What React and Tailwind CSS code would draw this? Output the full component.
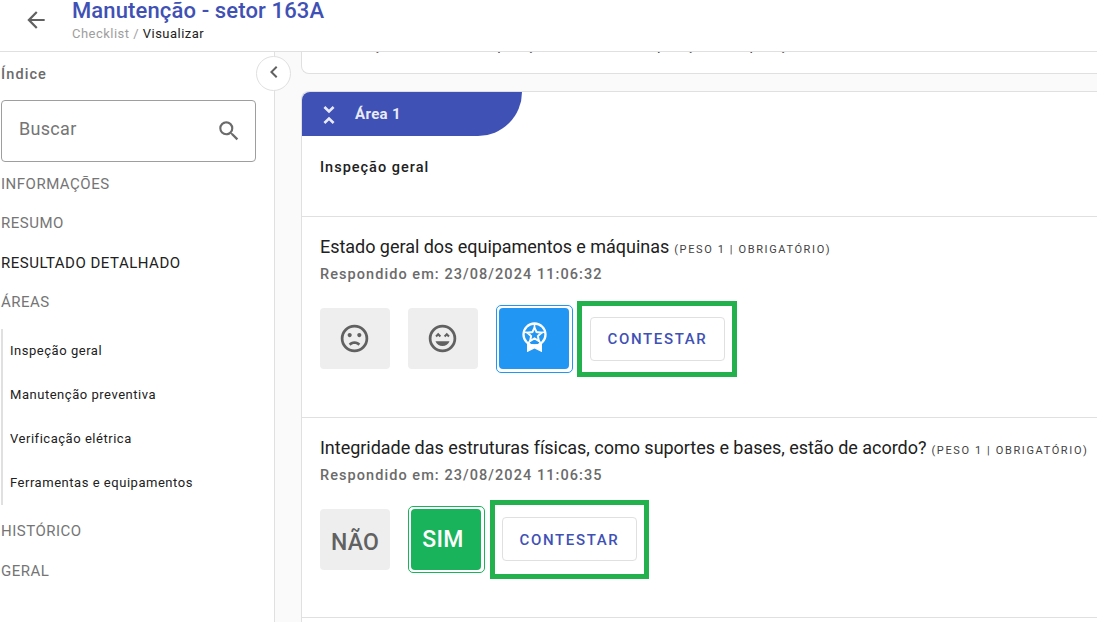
import React, { useState } from 'react';
import { MdArrowBack, MdChevronLeft, MdSearch } from 'react-icons/md';

const areas = ['Inspeção geral', 'Manutenção preventiva', 'Verificação elétrica', 'Ferramentas e equipamentos'];

const RING = 'M20,12A8,8 0 0,0 12,4A8,8 0 0,0 4,12A8,8 0 0,0 12,20A8,8 0 0,0 20,12M22,12A10,10 0 0,1 12,22A10,10 0 0,1 2,12A10,10 0 0,1 12,2A10,10 0 0,1 22,12';

const SadIcon = () => (
  <svg viewBox="0 0 24 24" className="w-[33px] h-[33px] mr-[2px]" fill="currentColor">
    <path d={RING} />
    <path d="M15.5,8C16.3,8 17,8.7 17,9.5C17,10.3 16.3,11 15.5,11C14.7,11 14,10.3 14,9.5C14,8.7 14.7,8 15.5,8M10,9.5C10,10.3 9.3,11 8.5,11C7.7,11 7,10.3 7,9.5C7,8.7 7.7,8 8.5,8C9.3,8 10,8.7 10,9.5M12,14C13.75,14 15.29,14.72 16.19,15.81L14.77,17.23C14.32,16.5 13.25,16 12,16C10.75,16 9.68,16.5 9.23,17.23L7.81,15.81C8.71,14.72 10.25,14 12,14Z" />
  </svg>
);

const HappyIcon = () => (
  <svg viewBox="0 0 24 24" className="w-[33px] h-[33px] mr-[2px]" fill="currentColor">
    <path d={RING} />
    <path d="M13,9.94L14.06,11L15.12,9.94L16.18,11L17.24,9.94L15.12,7.82L13,9.94M8.88,9.94L9.94,11L11,9.94L8.88,7.82L6.76,9.94L7.82,11L8.88,9.94M12,17.5C14.33,17.5 16.31,16.04 17.11,14H6.89C7.69,16.04 9.67,17.5 12,17.5Z" />
  </svg>
);

const MedalIcon = () => (
  <svg viewBox="0 0 26 30" className="w-[26px] h-[30px] ml-px" fill="none" stroke="currentColor" strokeWidth="2.3">
    <circle cx="12.5" cy="12.5" r="11" />
    <path d="M12.5 5.6l2.1 4.5 5 .6-3.7 3.4 1 4.9-4.4-2.5-4.4 2.5 1-4.9-3.7-3.4 5-.6z" strokeWidth="2" />
    <path d="M12.5 1.5v4M2 10l4 .8M23 10l-4 .8M6 21.5l2.2-3M19 21.5l-2.2-3" strokeWidth="1.6" />
    <path d="M5 20v10.2l7.5-3.8 7.5 3.8V20l-4.5 2.5h-6z" fill="currentColor" stroke="none" />
  </svg>
);

const CollapseIcon = () => (
  <svg viewBox="0 0 12 20" className="w-[12px] h-[20px]" fill="none" stroke="currentColor" strokeWidth="2.6">
    <path d="M1.4 2l4.6 4.5L10.6 2M1.4 18L6 13.5l4.6 4.5" />
  </svg>
);

const Selected = ({ border, fill, children }) => (
  <div className={`w-[77px] mr-[4px] pt-[2px] pl-[2px] rounded-[5px] border ${border}`}>
    <div className={`w-[70px] h-[61px] rounded-[4px] flex justify-center text-white ${fill}`}>{children}</div>
  </div>
);

const Option = ({ children }) => (
  <button className="w-[70px] h-[61px] mr-[18px] mt-[3px] rounded-[4px] bg-[#eeeeee] text-[#616161] flex items-center justify-center">
    {children}
  </button>
);

const ContestButton = ({ className }) => (
  <button className={`w-[135px] h-[44px] rounded-[4px] border border-[#e0e0e0] text-[#3f51b5] text-[15px] font-medium tracking-[1.64px] ${className}`}>
    CONTESTAR
  </button>
);

const Question = ({ title, date, className, children }) => (
  <div className={`border-t border-[#e0e0e0] pl-[18px] pt-[16px] whitespace-nowrap ${className}`}>
    <div className="h-[28px] leading-[27px]">
      <span className="text-[18px] tracking-[-0.03px] text-[#212121]">{title}</span>
      <span className="ml-[5px] text-[11px] tracking-[1.62px] text-[#424242]">(PESO 1 | OBRIGATÓRIO)</span>
    </div>
    <p className="h-[26px] leading-[27px] text-[14.5px] font-medium tracking-[1.06px] text-[#6b6b6b]">Respondido em: {date}</p>
    {children}
  </div>
);

const Sidebar = ({ search, onSearch }) => (
  <aside className="w-[275px] shrink-0 bg-white border-r border-[#e0e0e0] text-[#6b6b6b]">
    <h2 className="pl-[1px] mt-[12px] h-5 leading-[22px] text-[14.5px] font-medium tracking-[1.1px]">Índice</h2>
    <div className="ml-[1px] mt-[16px] w-[255px] h-[62px] rounded-[4px] border border-[#9e9e9e] flex items-center pl-[17px] pr-[13px]">
      <input
        value={search}
        onChange={(e) => onSearch(e.target.value)}
        placeholder="Buscar"
        className="min-w-0 flex-1 mb-[6px] text-[18px] tracking-[0.3px] outline-none placeholder:text-[#757575]"
      />
      <MdSearch size={26} />
    </div>
    <nav className="pl-[1px] pt-[3px] text-[15px] tracking-[0.5px] text-[#757575]">
      <p className="h-[39px] leading-[39px]">INFORMAÇÕES</p>
      <p className="h-[39px] leading-[39px]">RESUMO</p>
      <p className="h-[39px] leading-[41px] text-[#212121]">RESULTADO DETALHADO</p>
      <p className="h-[40px] leading-[41px]">ÁREAS</p>
      <ul className="mt-[7px] border-l-2 border-[#e0e0e0] pl-[7px] text-[13px] tracking-[0.53px] text-[#212121]">
        {areas.map((area) => (
          <li key={area} className="h-[44px] leading-[43px]">{area}</li>
        ))}
      </ul>
      <p className="mt-[6px] h-[40px] leading-[40px]">HISTÓRICO</p>
      <p className="h-[40px] leading-[40px]">GERAL</p>
    </nav>
  </aside>
);

const App = () => {
  const [search, setSearch] = useState('');

  return (
    <div className="relative w-[1097px] h-[622px] overflow-hidden bg-white font-['Roboto',sans-serif] flex flex-col">
      <header className="h-[52px] shrink-0 border-b border-[#e0e0e0] flex">
        <MdArrowBack size={26} className="ml-[23px] mt-[7px] text-[#616161]" />
        <div className="ml-[23px]">
          <h1 className="h-[24px] leading-[22px] text-[22px] font-medium tracking-[0.13px] text-[#3f51b5]">Manutenção - setor 163A</h1>
          <p className="leading-[20px] text-[13px] tracking-[0.48px] text-[#9e9e9e]">
            Checklist / <span className="text-[#212121]">Visualizar</span>
          </p>
        </div>
      </header>

      <div className="flex flex-1 min-h-0">
        <Sidebar search={search} onSearch={setSearch} />

        <main className="flex-1 min-w-0 bg-[#fafafa] pl-[26px]">
          {/* tail of the previous card, scrolled under the header */}
          <section className="h-[22px] overflow-hidden bg-white border-l border-b border-[#e0e0e0] rounded-bl-[8px]">
            <p className="-mt-[17px] pl-[18px] leading-[20px] text-[15px] tracking-[0.3px] text-[#424242]">
              Verificação do estado da posição do motor e da posição e da posição
            </p>
          </section>

          <section className="mt-[17px] bg-white border-l border-t border-[#e0e0e0] rounded-tl-[8px]">
            <div className="w-[220px] h-[44px] bg-[#3f51b5] rounded-tl-[8px] rounded-br-[44px] flex items-center pl-[21px] pt-px text-[#e8eaf6]">
              <CollapseIcon />
              <span className="ml-[20px] text-[15px] font-bold tracking-[0.35px]">Área 1</span>
            </div>
            <h3 className="h-[80px] pl-[18px] pt-[20px] leading-[23px] text-[14.5px] font-medium tracking-[1px] text-[#212121]">Inspeção geral</h3>

            <Question className="h-[201px]" title="Estado geral dos equipamentos e máquinas" date="23/08/2024 11:06:32">
              <div className="mt-[14px] flex items-start">
                <div className="mt-[4px] flex">
                  <Option><SadIcon /></Option>
                  <Option><HappyIcon /></Option>
                  <Selected border="border-[#2196f3] h-[68px]" fill="bg-[#2196f3] pt-[14px]"><MedalIcon /></Selected>
                </div>
                <div className="w-[160px] h-[76px] border-[5px] border-[#22b14c] pl-[8px] pt-[11px]">
                  <ContestButton />
                </div>
              </div>
            </Question>

            <Question className="h-[200px]" title="Integridade das estruturas físicas, como suportes e bases, estão de acordo?" date="23/08/2024 11:06:35">
              <div className="mt-[12px] flex items-start">
                <div className="mt-[6px] flex">
                  <Option><span className="mt-[7px] text-[23px] font-medium tracking-[0.2px]">NÃO</span></Option>
                  <Selected border="border-[#18b35a] h-[67px]" fill="bg-[#18b35a]">
                    <span className="mr-[6px] leading-[61px] text-[23px] font-medium tracking-[0.3px]">SIM</span>
                  </Selected>
                </div>
                <div className="ml-[1px] w-[159px] h-[79px] border-[5px] border-[#22b14c] pl-[7px] pt-[12px]">
                  <ContestButton className="pt-[2px]" />
                </div>
              </div>
            </Question>
            <div className="h-[20px] border-t border-[#e0e0e0]" />
          </section>
        </main>
      </div>

      {/* collapse handle sits on the sidebar edge */}
      <button className="absolute left-[256px] top-[56px] w-[35px] h-[35px] rounded-full border border-[#e0e0e0] bg-white flex items-center justify-center pb-[3px] text-[#616161]">
        <MdChevronLeft size={24} />
      </button>
    </div>
  );
};

export default App;
